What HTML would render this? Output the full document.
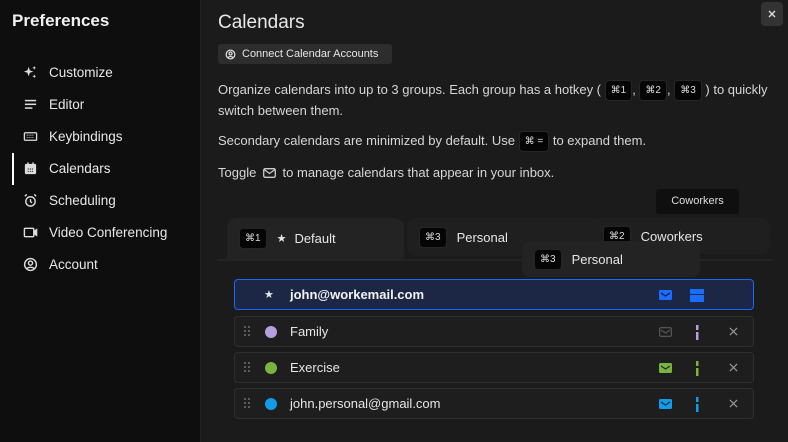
<!DOCTYPE html>
<html><head><meta charset="utf-8"><style>
*{box-sizing:border-box;margin:0;padding:0}
body{width:788px;height:442px;background:#1b1b1b;font-family:"Liberation Sans",sans-serif;color:#e6e6e6;position:relative;overflow:hidden}
.side{position:absolute;left:0;top:0;width:201px;height:442px;background:#0e0e0e;border-right:1px solid #222}
.side h1{position:absolute;left:12px;top:11px;font-size:17px;font-weight:bold;color:#f0f0f0}
.nav{position:absolute;left:23px;font-size:13.5px;color:#e8e8e8;display:flex;align-items:center}
.nav svg{width:15px;height:15px;margin-right:11px}
.ab{position:absolute}
.kbd{display:inline-block;background:#050505;border:1px solid #262626;border-radius:4px;font-size:10px;padding:3px 5px;color:#ddd;line-height:13px;vertical-align:middle}
p.t{position:absolute;left:218px;font-size:13px;color:#d6d6d6;line-height:20px}
.row{position:absolute;left:234px;width:520px;height:31px;background:#1e1e1e;border:1px solid #2f2f2f;border-radius:4px;font-size:13px}
.row .n{position:absolute;left:55px;top:7px}
.dot{position:absolute;left:30px;top:9px;width:12px;height:12px;border-radius:50%}
.drag{position:absolute;left:9px;top:9px}
.mail{position:absolute;left:424px;top:10px}
.bar{position:absolute;left:461px;top:8px}
.x{position:absolute;left:494px;top:10px}
.tab{position:absolute;border-radius:10px 10px 0 0;font-size:13px;display:flex;align-items:center;padding-left:12px}
.tab .kbd{margin-right:10px}
</style></head><body>
<div class="side">
<h1>Preferences</h1>
<div style="position:absolute;left:12px;top:153px;width:2px;height:32px;background:#fff"></div>
<div class="nav" style="top:65px"><svg viewBox="0 0 16 16" fill="#ddd"><path d="M6 2l1.3 3.7L11 7 7.3 8.3 6 12 4.7 8.3 1 7l3.7-1.3z"/><path d="M12 1l.6 1.4L14 3l-1.4.6L12 5l-.6-1.4L10 3l1.4-.6zM12 10l.6 1.4 1.4.6-1.4.6L12 14l-.6-1.4L10 12l1.4-.6z"/></svg>Customize</div>
<div class="nav" style="top:97px"><svg viewBox="0 0 16 16" fill="#ddd"><rect x="2" y="3" width="12" height="1.6"/><rect x="2" y="7" width="12" height="1.6"/><rect x="2" y="11" width="8" height="1.6"/></svg>Editor</div>
<div class="nav" style="top:129px"><svg viewBox="0 0 16 16"><rect x="1.5" y="4" width="13" height="8" rx="1" fill="none" stroke="#ddd" stroke-width="1.4"/><path d="M4 6.5h8M4 9h8" stroke="#ddd" stroke-dasharray="1 1"/></svg>Keybindings</div>
<div class="nav" style="top:161px"><svg viewBox="0 0 16 16"><rect x="2" y="3" width="12" height="11" rx="1.5" fill="#ddd"/><rect x="4.5" y="1.5" width="1.5" height="3" fill="#ddd"/><rect x="10" y="1.5" width="1.5" height="3" fill="#ddd"/><path d="M5 8.5h6M5 11h6" stroke="#0e0e0e" stroke-dasharray="1.2 1"/></svg>Calendars</div>
<div class="nav" style="top:193px"><svg viewBox="0 0 16 16" fill="none" stroke="#ddd" stroke-width="1.5"><circle cx="8" cy="9" r="5"/><path d="M8 6.5V9l1.5 1.5M2 3.5l2-2M14 3.5l-2-2"/></svg>Scheduling</div>
<div class="nav" style="top:225px"><svg viewBox="0 0 16 16" fill="none" stroke="#ddd" stroke-width="1.5"><rect x="1.5" y="3.5" width="10" height="9" rx="1"/><path d="M11.5 7l3-2v6l-3-2" fill="#ddd"/></svg>Video Conferencing</div>
<div class="nav" style="top:257px"><svg viewBox="0 0 16 16" fill="none" stroke="#ddd" stroke-width="1.5"><circle cx="8" cy="8" r="6.3"/><circle cx="8" cy="6.5" r="2.2"/><path d="M4 12.5c1.5-2 6.5-2 8 0"/></svg>Account</div>
</div>

<div class="ab" style="left:218px;top:12px;font-size:19px;color:#e8e8e8">Calendars</div>
<div class="ab" style="left:761px;top:2px;width:22px;height:24px;background:#333;border-radius:4px"><svg width="22" height="24" viewBox="0 0 22 24"><path d="M8 9l6 6M14 9l-6 6" stroke="#ddd" stroke-width="1.4"/></svg></div>
<div class="ab" style="left:218px;top:44px;width:174px;height:20px;background:#2d2d2d;border-radius:3px;font-size:11px;color:#e6e6e6;display:flex;align-items:center;padding-left:7px">
<svg width="11" height="11" viewBox="0 0 16 16" fill="none" stroke="#ddd" stroke-width="1.8" style="margin-right:6px"><circle cx="8" cy="8" r="6.3"/><circle cx="8" cy="6.5" r="2.2"/><path d="M4 12.5c1.5-2 6.5-2 8 0"/></svg>Connect Calendar Accounts</div>
<p class="t" style="top:80px;width:560px">Organize calendars into up to 3 groups. Each group has a hotkey ( <span class="kbd">⌘1</span>, <span class="kbd">⌘2</span>, <span class="kbd">⌘3</span> ) to quickly switch between them.</p>
<p class="t" style="top:131px">Secondary calendars are minimized by default. Use <span class="kbd">⌘ =</span> to expand them.</p>
<p class="t" style="top:163px">Toggle <svg width="13" height="10" viewBox="0 0 13 10" style="vertical-align:-1px;margin:0 3px"><rect x="0.7" y="0.7" width="11.6" height="8.6" rx="1.5" fill="none" stroke="#ccc" stroke-width="1.3"/><path d="M1 1.5l5.5 4 5.5-4" fill="none" stroke="#ccc" stroke-width="1.3"/></svg> to manage calendars that appear in your inbox.</p>

<div class="ab" style="left:656px;top:189px;width:83px;height:25px;background:#0f0f0f;border-radius:3px;font-size:11px;text-align:center;line-height:25px;color:#ddd">Coworkers</div>
<div class="ab" style="left:217px;top:259px;width:555px;height:2px;background:#232323"></div>
<div class="tab" style="left:407px;top:218px;width:210px;height:38px;background:#1f1f1f;border-radius:8px"><span class="kbd">⌘3</span>Personal</div>
<div class="tab" style="left:591px;top:218px;width:179px;height:36px;background:#1f1f1f;border-radius:8px"><span class="kbd">⌘2</span>Coworkers</div>
<div class="tab" style="left:227px;top:218px;width:177px;height:43px;background:#232323;padding-bottom:2px"><span class="kbd">⌘1</span><span style="margin-right:8px;font-size:11px">★</span>Default</div>
<div class="tab" style="left:522px;top:241px;width:178px;height:36px;background:#232323;border-radius:8px;padding-left:12px"><span class="kbd">⌘3</span>Personal</div>

<div class="row" style="top:279px;background:#1b2745;border-color:#1a66ff"><span class="ab" style="left:29px;top:8px;font-size:11px">★</span><span class="n" style="font-weight:bold;color:#f2f2f2">john@workemail.com</span>
<svg class="mail" width="13" height="10" viewBox="0 0 13 10"><rect width="13" height="10" rx="1.5" fill="#1a6dff"/><path d="M2 3l4.5 3 4.5-3" fill="none" stroke="#0b1d45" stroke-width="1.2"/></svg>
<div class="ab" style="left:455px;top:9px;width:14px;height:5px;background:#1a6dff"></div><div class="ab" style="left:455px;top:15px;width:14px;height:7px;background:#1a6dff"></div></div>

<div class="row" style="top:316px"><svg class="drag" width="6" height="10" viewBox="0 0 6 10" fill="#888"><circle cx="1" cy="1" r=".9"/><circle cx="5" cy="1" r=".9"/><circle cx="1" cy="5" r=".9"/><circle cx="5" cy="5" r=".9"/><circle cx="1" cy="9" r=".9"/><circle cx="5" cy="9" r=".9"/></svg><div class="dot" style="background:#b69fdf"></div><span class="n">Family</span>
<svg class="mail" width="13" height="10" viewBox="0 0 13 10"><rect x=".6" y=".6" width="11.8" height="8.8" rx="1.5" fill="none" stroke="#555" stroke-width="1.2"/><path d="M2 3l4.5 3 4.5-3" fill="none" stroke="#555" stroke-width="1.2"/></svg>
<svg class="bar" width="3" height="15"><rect x="0" y="0" width="2.5" height="5" fill="#b69fdf"/><rect x="0" y="7" width="2.5" height="8" fill="#b69fdf"/></svg>
<svg class="x" width="9" height="9" viewBox="0 0 10 10"><path d="M1 1l8 8M9 1l-8 8" stroke="#999" stroke-width="1.3"/></svg></div>

<div class="row" style="top:352px"><svg class="drag" width="6" height="10" viewBox="0 0 6 10" fill="#888"><circle cx="1" cy="1" r=".9"/><circle cx="5" cy="1" r=".9"/><circle cx="1" cy="5" r=".9"/><circle cx="5" cy="5" r=".9"/><circle cx="1" cy="9" r=".9"/><circle cx="5" cy="9" r=".9"/></svg><div class="dot" style="background:#79b440"></div><span class="n">Exercise</span>
<svg class="mail" width="13" height="10" viewBox="0 0 13 10"><rect width="13" height="10" rx="1.5" fill="#79b440"/><path d="M2 3l4.5 3 4.5-3" fill="none" stroke="#1e2e10" stroke-width="1.2"/></svg>
<svg class="bar" width="3" height="15"><rect x="0" y="0" width="2.5" height="5" fill="#79b440"/><rect x="0" y="7" width="2.5" height="8" fill="#79b440"/></svg>
<svg class="x" width="9" height="9" viewBox="0 0 10 10"><path d="M1 1l8 8M9 1l-8 8" stroke="#999" stroke-width="1.3"/></svg></div>

<div class="row" style="top:388px"><svg class="drag" width="6" height="10" viewBox="0 0 6 10" fill="#888"><circle cx="1" cy="1" r=".9"/><circle cx="5" cy="1" r=".9"/><circle cx="1" cy="5" r=".9"/><circle cx="5" cy="5" r=".9"/><circle cx="1" cy="9" r=".9"/><circle cx="5" cy="9" r=".9"/></svg><div class="dot" style="background:#139ae8"></div><span class="n">john.personal@gmail.com</span>
<svg class="mail" width="13" height="10" viewBox="0 0 13 10"><rect width="13" height="10" rx="1.5" fill="#139ae8"/><path d="M2 3l4.5 3 4.5-3" fill="none" stroke="#062a44" stroke-width="1.2"/></svg>
<svg class="bar" width="3" height="15"><rect x="0" y="0" width="2.5" height="5" fill="#139ae8"/><rect x="0" y="7" width="2.5" height="8" fill="#139ae8"/></svg>
<svg class="x" width="9" height="9" viewBox="0 0 10 10"><path d="M1 1l8 8M9 1l-8 8" stroke="#999" stroke-width="1.3"/></svg></div>
</body></html>
